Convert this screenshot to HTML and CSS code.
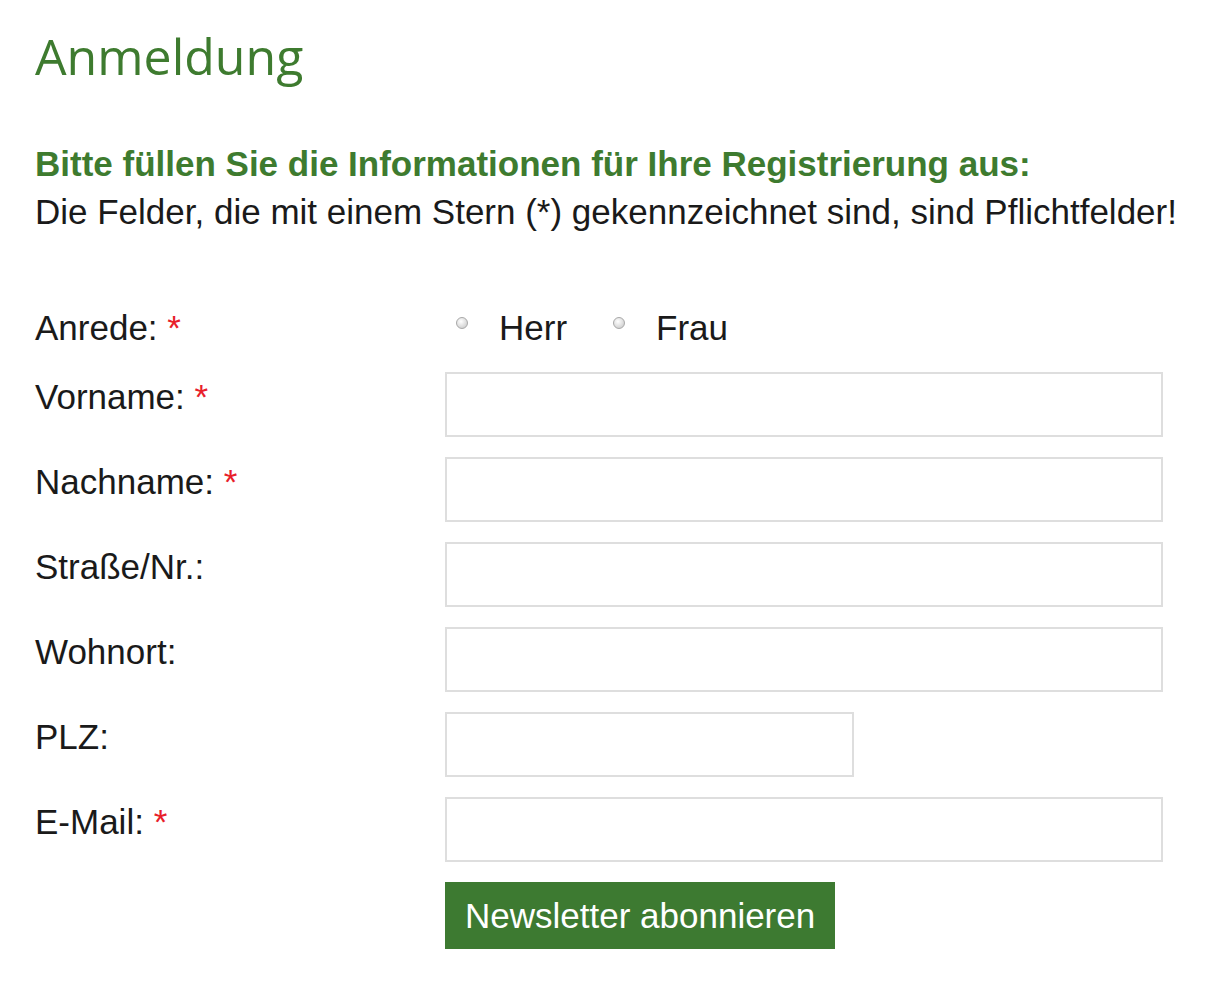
FILE: index.html
```html
<!DOCTYPE html>
<html lang="de">
<head>
  <meta charset="UTF-8">
  <title>Anmeldung</title>
  <link rel="stylesheet" href="styles.css">
</head>
<body>
  <div class="page">
    <h1>Anmeldung</h1>
    <div class="intro">
      <p class="lead">Bitte füllen Sie die Informationen für Ihre Registrierung aus:</p>
      <p>Die Felder, die mit einem Stern (*) gekennzeichnet sind, sind Pflichtfelder!</p>
    </div>

    <form class="form">
      <div class="row radio-row">
        <label class="label">Anrede: <span class="req">*</span></label>
        <div class="radios">
          <label class="radio"><input type="radio" name="anrede">Herr</label>
          <label class="radio"><input type="radio" name="anrede">Frau</label>
        </div>
      </div>
      <div class="row">
        <label class="label">Vorname: <span class="req">*</span></label>
        <input type="text" class="field">
      </div>
      <div class="row">
        <label class="label">Nachname: <span class="req">*</span></label>
        <input type="text" class="field">
      </div>
      <div class="row">
        <label class="label">Straße/Nr.:</label>
        <input type="text" class="field">
      </div>
      <div class="row">
        <label class="label">Wohnort:</label>
        <input type="text" class="field">
      </div>
      <div class="row">
        <label class="label">PLZ:</label>
        <input type="text" class="field short">
      </div>
      <div class="row">
        <label class="label">E-Mail: <span class="req">*</span></label>
        <input type="text" class="field">
      </div>
      <div class="row">
        <span></span>
        <div><button type="button" class="submit">Newsletter abonnieren</button></div>
      </div>
    </form>
  </div>
</body>
</html>
```

FILE: styles.css
```css
body {
  margin: 0;
  background-color: white;
  font-family: "Liberation Sans", Arial, sans-serif;
  color: #1a1a1a;
}
.page {
  padding: 22px 35px 0 35px;
}
h1 {
  margin: 0;
  font-family: "Open Sans", sans-serif;
  font-weight: normal;
  font-size: 50px;
  color: #3e7b2f;
}
.intro {
  margin-top: 50px;
  font-size: 35px;
}
.intro p {
  margin: 0;
  line-height: 48px;
}
.lead {
  font-weight: bold;
  color: #3e7b2f;
}
.form {
  margin-top: 72px;
  display: flex;
  flex-direction: column;
  gap: 20px;
}
.row {
  display: grid;
  grid-template-columns: 410px 1fr;
  align-items: start;
  font-size: 35px;
}
.label {
  padding-top: 5px;
}
.req {
  color: #e8202a;
}
.radio-row {
  margin-bottom: 4px;
}
.radio-row .label {
  padding-top: 0;
}
.radios {
  display: flex;
  gap: 35px;
}
.radio input {
  appearance: none;
  box-sizing: border-box;
  width: 12px;
  height: 12px;
  margin: 0 31px 0 11px;
  border: 1px solid #a8a8a8;
  border-radius: 50%;
  background: radial-gradient(circle at 40% 35%, #ffffff, #c4c4c4);
  vertical-align: 11px;
}
.field {
  box-sizing: border-box;
  width: 718px;
  height: 65px;
  border: 2px solid #dedede;
  font-size: 30px;
}
.field.short {
  width: 409px;
}
.submit {
  margin-top: 0;
  padding: 0 20px;
  height: 67px;
  background-color: #3d7a31;
  color: white;
  border: none;
  font-family: "Liberation Sans", Arial, sans-serif;
  font-size: 35px;
  cursor: pointer;
}
```
